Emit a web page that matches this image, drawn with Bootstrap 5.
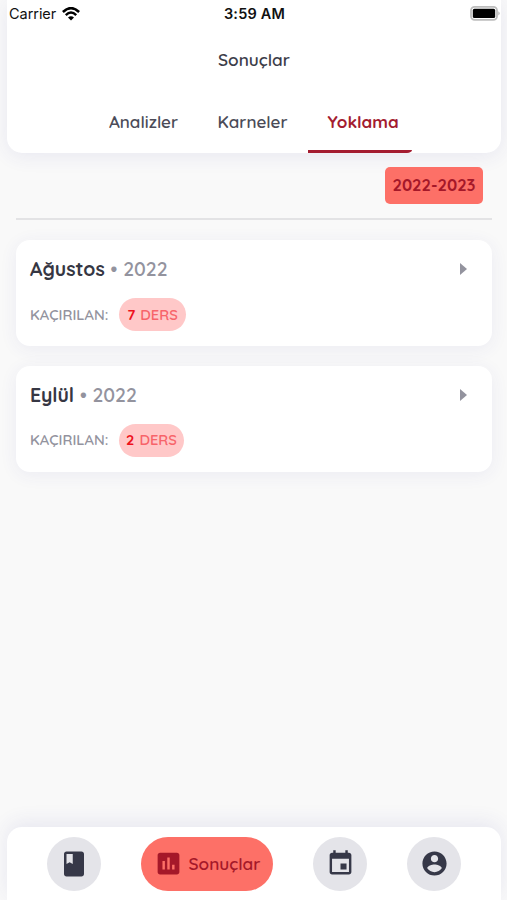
<!DOCTYPE html>
<html lang="tr">
<head>
<meta charset="utf-8">
<meta name="viewport" content="width=device-width, initial-scale=1">
<title>Sonuçlar</title>
<link href="https://cdn.jsdelivr.net/npm/bootstrap@5.3.0/dist/css/bootstrap.min.css" rel="stylesheet">
<style>
body { font-family: Quicksand, Lato, sans-serif; background: #f9f9f9; color: #3c3d49; height: 900px; overflow: hidden; line-height: 1; font-weight: 600; }
.top-panel { margin: 0 6px 0 7px; height: 152.5px; border-radius: 0 0 15px 15px; box-shadow: 0 3px 20px rgba(60,60,160,.09); }
.status-bar { height: 27px; font-family: Inter, sans-serif; color: #111; padding: 0 1px 0 2px; }
.status-bar > * { flex: 1 1 0; }
.carrier { font-size: 14.5px; font-weight: 400; letter-spacing: -.05px; padding-top: 1px; }
.clock { font-size: 14.5px; font-weight: 600; letter-spacing: .2px; padding-top: 1px; }
.wifi { margin-left: 6px; }
.screen-title { font-size: 17.2px; height: 66px; }
.tabs { height: 59.5px; margin-left: 82px; font-size: 17px; }
.tabs a { color: #4b4c58; text-decoration: none; padding-top: 20px; text-align: center; white-space: nowrap; }
.tab-a { width: 109px; } .tab-k { width: 109px; }
.tabs .tab-y { width: 104px; margin-left: 1px; padding-left: 6px; color: #a41c30; font-weight: 700; border-bottom: 3px solid #a41c30; border-bottom-right-radius: 5px 3px; }
.content { padding: 14.5px 15px 0 16px; }
.year-row { height: 53px; padding-right: 9px; border-bottom: 2px solid #e3e3e5; margin-bottom: 20px; }
.year-btn { width: 98px; height: 36.5px; border-radius: 5px; background: #fd7067; color: #a51829; font-size: 16.6px; font-weight: 700; border: 0; padding: 1px 0 0; line-height: 1; }
.month { height: 106px; border-radius: 14px; box-shadow: 0 3px 18px rgba(60,60,160,.07); padding: 13.5px 25px 0 14px; margin-bottom: 19.5px; }
.month-name { font-size: 19.4px; height: 31px; color: #363743; font-weight: 700; }
.month-name > div { padding-top: 2px; word-spacing: .4px; }
.muted { color: #93939e; font-weight: 600; }
.missed { font-size: 14.7px; color: #93939e; margin-top: 13.5px; height: 33px; }
.missed span { padding-top: 1px; }
.missed-label { width: 89px; }
.lesson-pill { height: 33px; border-radius: 17px; background: #ffc8c8; color: #f7646a; white-space: pre; word-spacing: 1px; }
.lesson-pill b { color: #ee111c; font-weight: 700; }
.bottom-panel { height: 73px; margin: 0 6px 0 7px; padding: 9.5px 40px 0; border-radius: 15px 15px 0 0; box-shadow: 0 -5px 20px rgba(60,60,160,.09); gap: 40px; }
.nav-dot { width: 54px; height: 54px; border-radius: 27px; background: #e4e4e9; color: #363848; }
.nav-wide { width: 132px; height: 54px; border-radius: 27px; background: #fd7067; color: #a51829; font-size: 17.2px; gap: 6px; text-decoration: none; }
svg { display: block; fill: currentColor; flex: none; }
</style>
</head>
<body class="d-flex flex-column">
<header class="top-panel bg-white">
  <div class="status-bar d-flex align-items-center">
    <div class="d-flex align-items-center"><span class="carrier">Carrier</span>
      <svg class="wifi" width="18" height="14" viewBox="0 0 18 14"><g fill="none" stroke="#000" stroke-width="2.5"><path d="M.9 5Q9-2.8 17.1 5"/><path d="M3.8 8.1Q9 3 14.2 8.1"/></g><path d="M6 10.4Q9 7.9 12 10.4L9 13.6Z" fill="#000"/></svg>
    </div>
    <div class="clock text-center">3:59 AM</div>
    <div class="d-flex justify-content-end"><svg width="31" height="15" viewBox="0 0 31 15"><rect x="2" y=".9" width="26" height="13" rx="3.6" fill="#fff" stroke="#bdbdbd" stroke-width="1.8"/><rect x="3.8" y="2.8" width="22.4" height="9.2" rx="1.6" fill="#000"/><path d="M29.3 5.2q2.8 2.2 0 4.4z" fill="#b5b5b5"/></svg></div>
  </div>
  <div class="screen-title d-flex align-items-center justify-content-center"><span>Sonuçlar</span></div>
  <nav class="tabs d-flex">
    <a class="tab-a" href="#"><span>Analizler</span></a>
    <a class="tab-k" href="#"><span>Karneler</span></a>
    <a class="tab-y" href="#"><span>Yoklama</span></a>
  </nav>
</header>
<main class="content flex-grow-1">
  <div class="year-row d-flex justify-content-end align-items-start"><button class="year-btn">2022-2023</button></div>
  <section class="month bg-white">
    <div class="month-name d-flex align-items-center justify-content-between"><div>Ağustos <span class="muted">• 2022</span></div><svg class="muted" width="7" height="12" viewBox="0 0 7 12"><path d="M0 0 7 6 0 12z"/></svg></div>
    <div class="missed d-flex align-items-center"><div class="missed-label d-flex"><span>KAÇIRILAN:</span></div><div class="lesson-pill d-flex align-items-center justify-content-center" style="width:67px"><span><b>7</b> DERS</span></div></div>
  </section>
  <section class="month bg-white">
    <div class="month-name d-flex align-items-center justify-content-between"><div>Eylül <span class="muted">• 2022</span></div><svg class="muted" width="7" height="12" viewBox="0 0 7 12"><path d="M0 0 7 6 0 12z"/></svg></div>
    <div class="missed d-flex align-items-center"><div class="missed-label d-flex"><span>KAÇIRILAN:</span></div><div class="lesson-pill d-flex align-items-center justify-content-center" style="width:65px"><span><b>2</b> DERS</span></div></div>
  </section>
</main>
<nav class="bottom-panel bg-white d-flex align-items-start">
  <a class="nav-dot d-flex align-items-center justify-content-center" href="#"><svg width="30" height="30" viewBox="0 0 24 24"><path d="M18 2H6c-1.1 0-2 .9-2 2v16c0 1.1.9 2 2 2h12c1.1 0 2-.9 2-2V4c0-1.1-.9-2-2-2zM6 4h5v8l-2.5-1.5L6 12V4z"/></svg></a>
  <a class="nav-wide d-flex align-items-center justify-content-center" href="#"><svg width="29" height="29" viewBox="0 0 24 24"><path d="M19 3H5c-1.1 0-2 .9-2 2v14c0 1.1.9 2 2 2h14c1.1 0 2-.9 2-2V5c0-1.1-.9-2-2-2zM9 17H7v-7h2v7zm4 0h-2V7h2v10zm4 0h-2v-4h2v4z"/></svg><span>Sonuçlar</span></a>
  <a class="nav-dot d-flex align-items-center justify-content-center" href="#"><svg width="29" height="29" viewBox="0 0 24 24"><path d="M17 12h-5v5h5v-5zM16 1v2H8V1H6v2H5c-1.11 0-1.99.9-1.99 2L3 19c0 1.1.89 2 2 2h14c1.1 0 2-.9 2-2V5c0-1.1-.9-2-2-2h-1V1h-2zm3 18H5V8h14v11z"/></svg></a>
  <a class="nav-dot d-flex align-items-center justify-content-center" href="#"><svg width="29" height="29" viewBox="0 0 24 24"><path d="M12 2C6.48 2 2 6.48 2 12s4.48 10 10 10 10-4.48 10-10S17.52 2 12 2zm0 3c1.66 0 3 1.34 3 3s-1.34 3-3 3-3-1.34-3-3 1.34-3 3-3zm0 14.2c-2.5 0-4.71-1.28-6-3.22.03-1.99 4-3.08 6-3.08 1.99 0 5.97 1.09 6 3.08-1.29 1.94-3.5 3.22-6 3.22z"/></svg></a>
</nav>
<script src="https://cdn.jsdelivr.net/npm/bootstrap@5.3.0/dist/js/bootstrap.bundle.min.js"></script>
</body>
</html>
